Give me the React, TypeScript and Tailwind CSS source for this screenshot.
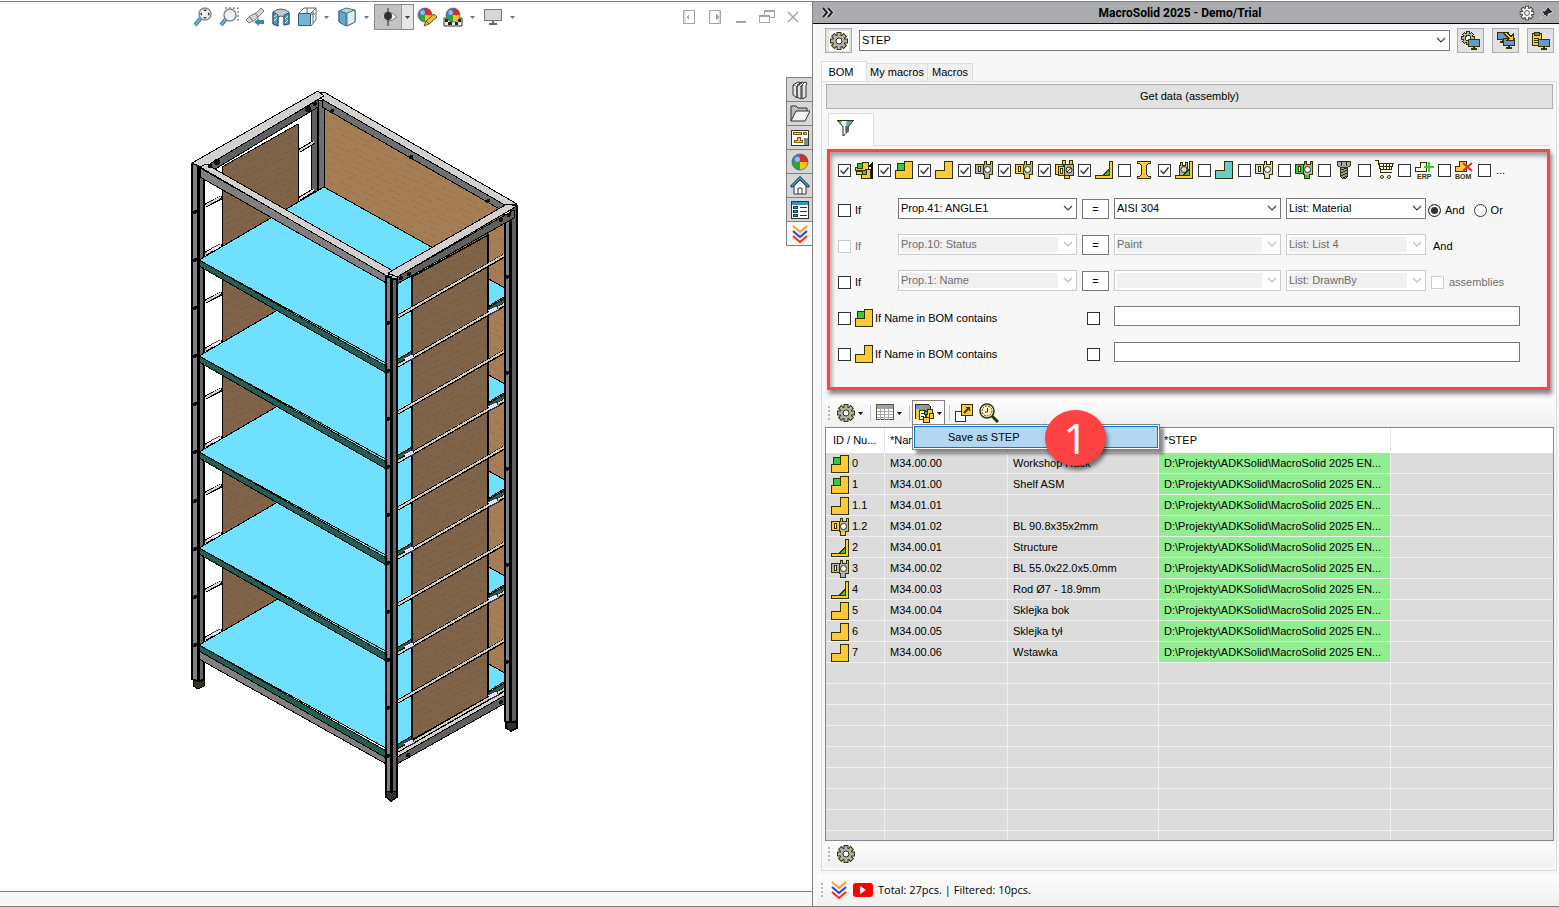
import React, { useState } from 'react';
import clsx from 'clsx';

const INK = '#333300';
const YELLOW = '#ffc933';
const GREEN = '#33cc33';
const BLUE = '#6699cc';

type IconProps = { className?: string };

function Svg({ size = 18, crisp = true, className, children }: { size?: number; crisp?: boolean; className?: string; children: React.ReactNode }) {
  return (
    <svg
      width={size}
      height={size}
      viewBox={`0 0 ${size} ${size}`}
      fill="none"
      shapeRendering={crisp ? 'crispEdges' : 'auto'}
      className={clsx('shrink-0', className)}
      aria-hidden="true"
    >
      {children}
    </svg>
  );
}

/* ---------- BOM type icons ---------- */

const PartIcon = ({ fill = YELLOW }: { fill?: string }) => (
  <Svg>
    <path d="M9.5 .5h8v17h-17v-8h9z" fill={fill} stroke={INK} />
  </Svg>
);

const AssemblyIcon = () => (
  <Svg>
    <path d="M9.5 .5h8v17h-17v-8h9z" fill={YELLOW} stroke={INK} />
    <path d="M2.5 2.5h7v7h-7z" fill={GREEN} stroke={INK} />
  </Svg>
);

const TopAssemblyIcon = () => (
  <Svg>
    <path d="M7.5 1.5h6v8h-13v-3h7z" fill={YELLOW} stroke={INK} />
    <path d="M2.5 2.5h5v5h-5z" fill={GREEN} stroke={INK} />
    <path d="M10.5 8.5h5v9h-9v-4h-5v-3h9z" fill={YELLOW} stroke={INK} />
    <path d="M7.5 9.5h4v4h-4z" fill={GREEN} stroke={INK} />
    <path d="M18 0v18h-2V6h-2V4z" fill="#111100" />
  </Svg>
);

const BlockIcon = ({ left = '#b4b4b4', right = '#b4b4b4', stem = '#b4b4b4' }: { left?: string; right?: string; stem?: string }) => (
  <Svg>
    <path d="M.5 3.5h8v9h-8z" fill={left} stroke={INK} />
    <path d="M3.5 5.5h2v5h-2z" fill="#f2f2e6" stroke={INK} />
    <path d="M9.5 .5h2v3h-2zM15.5 .5h2v3h-2z" fill={stem} stroke={INK} />
    <path d="M9.5 13.5h5v4h-5z" fill={stem} stroke={INK} />
    <path d="M8.5 3.5h9v10h-9z" fill={right} stroke={INK} />
    <path d="M10 3.5h1M16 3.5h1M10 13.5h4" stroke={right} />
    <circle cx="12.5" cy="8.5" r="3" fill="#fff" stroke={INK} shapeRendering="auto" />
  </Svg>
);

const MultiBlockIcon = () => (
  <Svg size={20}>
    <path d="M.5 4.5h8v10h-8z" fill={YELLOW} stroke={INK} />
    <path d="M7.5 .5h3v4h-3zM14.5 .5h3v4h-3zM9.5 15.5h5v3h-5z" fill={YELLOW} stroke={INK} />
    <path d="M3.5 6.5h6v9h-6z" fill={YELLOW} stroke={INK} />
    <path d="M5.5 8.5h2v5h-2z" fill="#f2f2e6" stroke={INK} />
    <path d="M9.5 4.5h9v11h-9z" fill="#b4b4b4" stroke={INK} />
    <circle cx="14" cy="10" r="3" fill="#ddd" stroke={INK} shapeRendering="auto" />
    <path d="M12 12l4-4" stroke={INK} />
  </Svg>
);

const WeldIcon = () => (
  <Svg>
    <path d="M14.5 .5h3v17h-17v-3h14z" fill={YELLOW} stroke={INK} />
    <path d="M8 14.5L14.5 8v6.5z" fill={GREEN} stroke={INK} />
  </Svg>
);

const BeamIcon = () => (
  <Svg>
    <path d="M2.5 .5h13v2h-2l-2 2v9l2 2h2v2h-13v-2h2l2-2v-9l-2-2h-2z" fill={YELLOW} stroke={INK} />
  </Svg>
);

const WeldBlockIcon = () => (
  <Svg>
    <path d="M5.5 1.5h2v3h3v-3h2v13h-8v-10h1z" fill="#b4b4b4" stroke={INK} />
    <path d="M14.5 .5h3v17h-17v-3h14z" fill={YELLOW} stroke={INK} />
    <circle cx="9" cy="8.5" r="3" fill="#ddd" stroke={INK} shapeRendering="auto" />
    <path d="M8 14.5L14.5 8v6.5z" fill={GREEN} stroke={INK} />
  </Svg>
);

const BoltIcon = () => (
  <Svg>
    <path d="M2.5 .5h13v4l-3 2h-7l-3-2z" fill="#a6a6a6" stroke={INK} />
    <path d="M6.5 1v4M11.5 1v4" stroke={INK} />
    <path d="M5.5 6.5h7v9l-2 2h-3l-2-2z" fill="#999" stroke={INK} />
    <path d="M6 9l6-2M6 12l6-3M6 15l6-3M8 17l4-2" stroke={INK} />
  </Svg>
);

const CartIcon = () => (
  <Svg size={20}>
    <path d="M0 .5h3l3 12h11M4 3.5h14l-2 6H6M5 6.5h12M8.5 3v7M11.5 3v7M14.5 3v7" stroke={INK} />
    <path d="M5 12.5h12" stroke={INK} />
    <circle cx="7" cy="17" r="1.5" stroke={INK} shapeRendering="auto" />
    <circle cx="14" cy="17" r="1.5" stroke={INK} shapeRendering="auto" />
  </Svg>
);

const ErpIcon = () => (
  <svg width="20" height="19" viewBox="0 0 20 19" fill="none" className="shrink-0" aria-hidden="true">
    <path d="M5.5 1.5h6v9H.5v-4h5z" fill="#f7f7f0" stroke={INK} shapeRendering="crispEdges" />
    <path d="M9 6h10M14 1v10" stroke={GREEN} strokeWidth="2" shapeRendering="crispEdges" />
    <text x="2" y="18" fontSize="7" fontWeight="700" fontFamily="Liberation Sans, Arial, sans-serif" fill={INK}>ERP</text>
  </svg>
);

const BomIcon = () => (
  <svg width="20" height="19" viewBox="0 0 20 19" fill="none" className="shrink-0" aria-hidden="true">
    <path d="M4.5 .5h7v10h-11v-5h4z" fill={YELLOW} stroke={INK} shapeRendering="crispEdges" />
    <path d="M8 2l9 8M17 2l-9 8" stroke="#d63333" strokeWidth="2" />
    <text x="0" y="18" fontSize="7" fontWeight="700" fontFamily="Liberation Sans, Arial, sans-serif" fill={INK}>BOM</text>
  </svg>
);

/* ---------- toolbar icons ---------- */

const TEETH = [0, 45, 90, 135];

const GearIcon = ({ size = 20, fill = '#b0b0b0', ink = INK, hole = '#fff' }: { size?: number; fill?: string; ink?: string; hole?: string }) => (
  <svg width={size} height={size} viewBox="0 0 20 20" className="shrink-0" aria-hidden="true">
    {TEETH.map(a => (
      <rect key={a} x="7.5" y="1" width="5" height="18" fill={ink} transform={`rotate(${a} 10 10)`} />
    ))}
    <circle cx="10" cy="10" r="6.5" fill={ink} />
    {TEETH.map(a => (
      <rect key={a} x="8.5" y="2" width="3" height="16" fill={fill} transform={`rotate(${a} 10 10)`} />
    ))}
    <circle cx="10" cy="10" r="5.5" fill={fill} />
    <circle cx="10" cy="10" r="3" fill={hole} stroke={ink} />
  </svg>
);

const Monitor = ({ x, y }: { x: number; y: number }) => (
  <g transform={`translate(${x} ${y})`}>
    <path d="M.5 .5h11v7H.5z" fill={BLUE} stroke={INK} />
    <path d="M6 8v2M3 10h6" stroke={INK} strokeWidth="2" />
  </g>
);

const GearMonitorIcon = () => (
  <Svg size={20}>
    <g transform="translate(7 7)">
      {TEETH.map(a => (
        <path key={a} d="M0 -7V7" stroke={INK} strokeWidth="4" transform={`rotate(${a})`} />
      ))}
      {TEETH.map(a => (
        <path key={a} d="M0 -6V6" stroke="#b0b0b0" strokeWidth="2" transform={`rotate(${a})`} />
      ))}
      <circle r="4" fill="#b0b0b0" />
      <circle r="2.5" fill="#fff" stroke={INK} />
    </g>
    <Monitor x={7} y={8} />
  </Svg>
);

const SendMonitorIcon = () => (
  <Svg size={20}>
    <Monitor x={1} y={1} />
    <Monitor x={7} y={7} />
    <path d="M7 1.5h4l4 4 2-2v6h-6l2-2z" fill={YELLOW} stroke={INK} />
  </Svg>
);

const ClipboardMonitorIcon = () => (
  <Svg size={20}>
    <path d="M1.5 2.5h9v12h-9z" fill={YELLOW} stroke={INK} />
    <path d="M3.5 1.5h5v3h-5z" fill="#808080" stroke={INK} />
    <path d="M3 7.500h5M3 9.500h4M3 11.500h4" stroke={INK} />
    <Monitor x={7} y={8} />
  </Svg>
);

const FunnelIcon = () => (
  <Svg crisp={false}>
    <path d="M1 1h15l-4 6v5l-5 5V8L1 2z" fill={BLUE} />
    <path d="M6 1h4l-1 6v7l-2 2V8L4 4z" fill="#eef2f8" />
    <path d="M0 1.5h17M1 2l5 6v9M16 2l-5 6v5M6 17l2-2M9 7v7" stroke={INK} />
  </Svg>
);

const GridIcon = () => (
  <Svg>
    <path d="M.5 .5h17v15H.5z" fill="#fff" stroke="#555544" />
    <path d="M1 1h16v3H1z" fill="#a0a0a0" />
    <path d="M1 4.5h16M1 7.5h16M1 10.5h16M1 13.5h16M4.5 4v12M8.5 4v12M12.5 4v12" stroke="#a8a8a8" />
  </Svg>
);

const SaveIcon = () => (
  <Svg size={20}>
    <path d="M.5 .5h13l2 2v12H.5z" fill={BLUE} stroke={INK} />
    <path d="M4 1h8v4H4z" fill="#9a9a9a" />
    <path d="M1 5h3v10H1z" fill={YELLOW} />
    <path d="M4.5 6.500h6v9h-6z" fill="#fff" stroke={INK} />
    <path d="M6 9.500h3M6 12.500h3" stroke={INK} />
    <path d="M12.5 5.500h5v8h-6v-4h1z" fill={YELLOW} stroke={INK} />
    <path d="M9.500 7.500h3v3h-3z" fill={GREEN} stroke={INK} />
    <path d="M14.500 9.500h4v5h-4v4h-6v-5h6z" fill={YELLOW} stroke={INK} />
  </Svg>
);

const PopOutIcon = () => (
  <Svg>
    <path d="M.5 7.5h10v10H.5z" fill="#fff" stroke={INK} />
    <path d="M6.5 .5h11v11h-11z" fill={YELLOW} stroke={INK} />
    <path d="M9 9l5-5" stroke={INK} strokeWidth="2" shapeRendering="auto" />
    <path d="M10 3h5v5z" fill={INK} />
  </Svg>
);

const InspectIcon = () => (
  <Svg size={20} crisp={false}>
    <circle cx="8" cy="8" r="7" fill="#fff" stroke={INK} strokeWidth="1.500" />
    <circle cx="8" cy="8" r="5" fill="#fff3c8" stroke={INK} strokeDasharray="2 1" />
    <path d="M8.500 5v4H6" stroke={INK} />
    <path d="M13 13l6 6" stroke={INK} strokeWidth="3" />
  </Svg>
);

const ChevronsIcon = () => (
  <Svg crisp={false}>
    <path d="M2 1l7 6 7-6" stroke="#ff9a22" strokeWidth="2" />
    <path d="M2 6l7 6 7-6" stroke="#2040d8" strokeWidth="2" />
    <path d="M2 11l7 6 7-6" stroke="#ff2a10" strokeWidth="2" />
  </Svg>
);

/* ---------- viewport icons ---------- */

const Lens = ({ cx, cy }: { cx: number; cy: number }) => (
  <>
    <path d={`M${cx - 4} ${cy + 4}L2 18`} stroke="#2f6f96" strokeWidth="4" />
    <path d={`M${cx - 4} ${cy + 4}L2 18`} stroke="#6fb6d8" strokeWidth="2" />
    <circle cx={cx} cy={cy} r="6" fill="#f0f3f5" stroke="#85898c" strokeWidth="1.500" />
  </>
);

const ZoomFitIcon = () => (
  <Svg size={20} crisp={false}>
    <Lens cx={12} cy={7} />
    <path d="M12 2l2 2h-4zM12 12l2-2h-4zM7 7l2-2v4zM17 7l-2-2v4z" fill="#444" />
  </Svg>
);

const ZoomAreaIcon = () => (
  <Svg size={20} crisp={false}>
    <path d="M6 1h13v13" stroke="#555" strokeDasharray="2 2" />
    <Lens cx={11} cy={8} />
  </Svg>
);

const PrevViewIcon = () => (
  <Svg size={20} crisp={false}>
    <path d="M16 1l3 3-9 9-6 3-3-3 4-4 6-3z" fill="#d3d5d6" stroke="#777" />
    <path d="M4 9l4 5M10 6l3 4" stroke="#666" />
    <path d="M9 15l5-4v2h5v4h-5v2z" fill="#3d86ab" />
  </Svg>
);

const SectionIcon = () => (
  <Svg size={20} crisp={false}>
    <path d="M2 5q8-6 16 0v12l-5 1v-8q-3-2-6 0v9l-5-2z" fill="#c4c8ca" stroke="#55606a" />
    <path d="M2 5l5 3v11l-5-2zM13 8l5-2v11l-5 1z" fill="#4f9cc2" stroke="#23536d" />
    <path d="M3 10l3-2M3 14l3-3M14 12l3-3M14 16l3-3" stroke="#d9eef8" />
  </Svg>
);

const OrientIcon = () => (
  <Svg size={20} crisp={false}>
    <path d="M2 6l5-5h12v12l-5 6" fill="#fff" stroke="#59646b" />
    <path d="M14 6l5-5M10 1v6M16 4v12M8 7h10" stroke="#59646b" />
    <path d="M1.5 6.5h12v12h-12z" fill="#74b5d4" stroke="#2d5f7b" />
  </Svg>
);

const CubeIcon = () => (
  <Svg size={20} crisp={false}>
    <path d="M2 4l7-3 9 2v12l-8 4-8-4z" fill="#a9d7ea" stroke="#5a6b75" />
    <path d="M2 4l7 2v13l-7-4z" fill="#5ca7cb" stroke="#3a6f8a" />
    <path d="M10 6l8-3v12l-8 4z" fill="#dceef5" stroke="#5a6b75" />
  </Svg>
);

const EyeIcon = () => (
  <Svg size={20} crisp={false}>
    <path d="M1 10q9-10 18 0-9 8-18 0z" fill="#eee" stroke="#777" />
    <path d="M1 10q4-5 9-5v9q-6 0-9-4z" fill="#c9c9c9" />
    <circle cx="10" cy="9" r="4" fill="#333" />
    <path d="M10 1v18" stroke="#222" />
  </Svg>
);

const Ball = ({ cx = 9, cy = 8, r = 7 }: { cx?: number; cy?: number; r?: number }) => (
  <g transform={`translate(${cx} ${cy})`}>
    <path d={`M0 0V${-r}A${r} ${r} 0 0 0 ${-r} 0z`} fill="#3b76c4" />
    <path d={`M0 0H${r}A${r} ${r} 0 0 0 0 ${-r}z`} fill="#d92c22" />
    <path d={`M0 0V${r}A${r} ${r} 0 0 0 ${r} 0z`} fill="#f2c61c" />
    <path d={`M0 0H${-r}A${r} ${r} 0 0 0 0 ${r}z`} fill="#2da53a" />
    <circle cx={-r / 3} cy={-r / 3} r={r / 3} fill="#fff" opacity=".5" />
    <circle r={r} stroke="#555" strokeWidth=".7" />
  </g>
);

const AppearanceIcon = () => (
  <Svg size={20} crisp={false}>
    <Ball cx={8} />
    <path d="M7 19l2-5 8-7 3 3-8 7z" fill="#e8bd3a" stroke="#6b5520" />
    <path d="M9 14l3 3" stroke="#6b5520" />
  </Svg>
);

const SceneIcon = () => (
  <Svg size={20} crisp={false}>
    <path d="M1 11h18v8H1z" fill="#eee" stroke="#333" />
    <path d="M2 12h3v3H2zM15 12h3v3h-3zM5 15h4v3H5zM12 15h3v3h-3z" fill="#222" />
    <Ball cx={10} />
  </Svg>
);

const DisplayIcon = () => (
  <Svg size={20}>
    <path d="M1.5 2.5h17v11h-17z" fill="#d5d8da" stroke="#777" />
    <path d="M10 14v3M6 17h8" stroke="#666" strokeWidth="2" />
  </Svg>
);

const LibraryIcon = () => (
  <Svg size={20} crisp={false}>
    <path d="M3 5l4 1v12l-4-3zM7 5l4 1v13l-4-2zM12 5l4-1v13l-4 2z" fill="#e4e4e4" stroke="#333" />
    <path d="M3 5l5-3 4 1-5 3M7 5l5-3 2 1-3 3M12 5l3-3 2 1-1 2" fill="#fff" stroke="#333" />
  </Svg>
);

const FolderIcon = () => (
  <Svg size={20} crisp={false}>
    <path d="M1 17V2h5l2 2h9v4" fill="#bdbdbd" stroke="#333" />
    <path d="M1 17L6 7h14l-5 10z" fill="#f4f4f4" stroke="#333" />
  </Svg>
);

const PaletteIcon = () => (
  <Svg>
    <path d="M.5 1.5h17v15H.5z" fill="#fff" stroke="#333" />
    <path d="M2.5 3.5h8v2h-8zM12.5 3.5h3v2h-3zM6.5 8.5h3v3h2v2h-8v-2h3z" fill={YELLOW} stroke="#7a5a00" />
    <path d="M13 9h4v7h-4z" fill="#888" />
  </Svg>
);

const HomeIcon = () => (
  <Svg size={20} crisp={false}>
    <path d="M4 10v8h12v-8l-6-6z" fill="#fff" stroke="#333" />
    <path d="M1 11l9-9 9 9" stroke="#173f55" strokeWidth="3" />
    <path d="M2 10l8-8 8 8" stroke="#4c9ec4" strokeWidth="1.500" />
    <path d="M8 18v-6h4v6" stroke="#333" />
  </Svg>
);

const PropsIcon = () => (
  <Svg>
    <path d="M.5 .5h17v17H.5z" fill="#fff" stroke="#333" />
    <path d="M1 1h16v3H1z" fill="#3a92bd" />
    <path d="M2.5 5.500h4v2h-4zM2.500 9.500h4v2h-4zM2.500 13.500h4v2h-4z" fill="#3a92bd" stroke="#153c50" />
    <path d="M9 6.500h7M9 10.500h7M9 14.500h7" stroke="#333" />
  </Svg>
);

const Caret = ({ className = 'text-gray-500' }: IconProps) => (
  <svg width="5" height="3" viewBox="0 0 5 3" className={clsx('shrink-0', className)} aria-hidden="true">
    <path d="M0 0h5L2.5 3z" fill="currentColor" />
  </svg>
);

/* ---------- 3D model ---------- */

const LEVELS = [0, 96, 192, 288, 385];

function RackModel() {
  return (
    <svg width="330" height="712" viewBox="190 90 330 712" fill="none" role="img" aria-label="Workshop Rack" shapeRendering="crispEdges" className="shrink-0">
      <defs>
        <pattern id="woodLight" width="24" height="12" patternUnits="userSpaceOnUse" patternTransform="rotate(24)">
          <rect width="24" height="12" fill="#a57e56" />
          <path d="M0 3h14M6 8h18" stroke="#9b7045" strokeWidth="1" strokeDasharray="5 2 2 1" />
        </pattern>
        <pattern id="woodDark" width="22" height="12" patternUnits="userSpaceOnUse" patternTransform="rotate(-24)">
          <rect width="22" height="12" fill="#806449" />
          <path d="M0 3h14M6 8h16" stroke="#775839" strokeWidth="1" strokeDasharray="4 2 2 1" />
        </pattern>
      </defs>

      <g stroke="#000" strokeLinejoin="round">
        {/* back panel and rear post */}
        <path d="M324 106L504 208V694L324 590z" fill="url(#woodLight)" />
        <path d="M311 100h6v92h-6z" fill="#606060" />
        <path d="M318 100h6v92h-6z" fill="#707070" />
        <path d="M222 167L298 124V590L222 632z" fill="url(#woodDark)" />
        {[0, 48].map(d => (
          <g key={d}>
            <path d={`M299 ${151 + d}l15-9`} strokeWidth="4" />
            <path d={`M299 ${151 + d}l15-9`} stroke="#d8d4cc" strokeWidth="2" />
          </g>
        ))}

        {/* rods on the left side */}
        {LEVELS.map(d => (
          <g key={d}>
            <path d={`M205 ${206 + d}l17-9M205 ${254 + d}l17-9`} strokeWidth="4" />
            <path d={`M205 ${206 + d}l16-9M205 ${254 + d}l16-9`} stroke="#d8d4cc" strokeWidth="2" />
            <path d={`M213 ${250 + d}l8-4`} stroke="#445" strokeWidth="5" />
            <path d={`M213 ${250 + d}l8-4`} stroke="#e4e9ff" strokeWidth="4" />
          </g>
        ))}

        {/* left post */}
        <path d="M193 680h11v6l-6 3-5-3z" fill="#33332a" />
        <path d="M192 164h6v517l-6-2z" fill="#808080" strokeWidth="1.5" />
        <path d="M199 167h5v512l-5 2z" fill="#666" strokeWidth="1.5" />

        {/* bottom beams */}
        <path d="M199 650L388 757V765L199 659z" fill="#808080" />
        <path d="M397 749L509 685V693L397 757z" fill="#d2d1cf" />
        <path d="M397 757L509 693V701L397 764z" fill="#606060" />

        {/* shelves, lowest first */}
        {[...LEVELS].reverse().map(d => (
          <g key={d} transform={`translate(0 ${d})`}>
            <path d="M199 260L324 187L512 292L391 366z" fill="#70e0ff" />
            <path d="M199 260L388 367V374L199 266z" fill="#235f52" />
            <path d="M391 363L512 294V299L391 368z" fill="#235f52" />
          </g>
        ))}

        {/* rear and left top beams */}
        <path d="M322 98L503 202V211L322 107z" fill="#707070" />
        <path d="M317 92L324 92L517 204L503 204L320 98z" fill="#d2d1cf" />
        <path d="M203 167L318 100V107L207 174z" fill="#606060" />
        <path d="M192 163L318 91L324 96L203 168z" fill="#d2d1cf" />

        {/* side panel */}
        <path d="M412 277L488 235V697L412 740z" fill="url(#woodDark)" strokeWidth="1.5" />

        {LEVELS.map(d => (
          <g key={d}>
            <path d={`M397 ${317 + d}L509 ${253 + d}M397 ${366 + d}L509 ${302 + d}`} strokeWidth="4" />
            <path d={`M397 ${317 + d}L508 ${253 + d}M397 ${366 + d}L508 ${302 + d}`} stroke="#d3cbbe" strokeWidth="2" />
            <path d={`M405 ${360 + d}l9-4M489 ${312 + d}l9-4`} stroke="#334" strokeWidth="6" />
            <path d={`M405 ${360 + d}l8-4M489 ${312 + d}l8-4`} stroke="#dfe4fb" strokeWidth="4" />
          </g>
        ))}

        {/* right and front posts */}
        <g strokeWidth="1.5">
          <path d="M506 722h11v6l-6 3-5-3z" fill="#33332a" />
          <path d="M505 215h5v507l-5-1z" fill="#808080" />
          <path d="M511 206h6v515l-6 1z" fill="#606060" />
          <path d="M386 791h11v6l-6 4-5-4z" fill="#33332a" />
        </g>

        {/* front top beams */}
        <path d="M200 168L388 275V284L200 177z" fill="#808080" />
        <path d="M200 167L206 164L393 271L387 276z" fill="#d2d1cf" />
        <path d="M397 277L514 210V218L397 284z" fill="#606060" />
        <path d="M388 273L507 204L517 206L397 277z" fill="#d2d1cf" />
        <g strokeWidth="1.5">
          <path d="M386 277h5v515l-5-1z" fill="#808080" />
          <path d="M392 279h5v512l-5 1z" fill="#606060" />
        </g>
      </g>

      <g fill="#111">
        {[0, 48, 96, 144, 192, 240, 289, 337, 385, 433].map(d => (
          <React.Fragment key={d}>
            <circle cx="195" cy={212 + d} r="2" />
            <circle cx="388" cy={323 + d} r="2" />
          </React.Fragment>
        ))}
        {LEVELS.map(d => (
          <circle key={d} cx="507" cy={277 + d} r="2" />
        ))}
        <circle cx="332" cy="111" r="2" />
        <circle cx="411" cy="157" r="2" />
        <circle cx="488" cy="201" r="2" />
        <circle cx="308" cy="109" r="3" />
        <circle cx="315" cy="104" r="2" />
        <circle cx="217" cy="162" r="3" />
        <circle cx="210" cy="166" r="2" />
        <circle cx="401" cy="278" r="2" />
        <circle cx="409" cy="274" r="2" />
        <circle cx="501" cy="220" r="2" />
        <circle cx="509" cy="215" r="2" />
        <circle cx="408" cy="755" r="2" />
        <circle cx="501" cy="702" r="2" />
      </g>
    </svg>
  );
}

/* ---------- form controls ---------- */

function Check({ id, label, defaultChecked = false, disabled = false }: { id?: string; label?: string; defaultChecked?: boolean; disabled?: boolean }) {
  return (
    <span className="grid size-[13px] shrink-0">
      <input
        id={id}
        type="checkbox"
        aria-label={label}
        defaultChecked={defaultChecked}
        disabled={disabled}
        className="peer col-start-1 row-start-1 size-[13px] appearance-none border border-[#333] bg-white disabled:border-[#ccc]"
      />
      <svg viewBox="0 0 13 13" fill="none" className="pointer-events-none invisible col-start-1 row-start-1 size-[13px] peer-checked:visible" aria-hidden="true">
        <path d="M2.5 6.5l3 3 5-6" stroke="#333" strokeWidth="1.300" />
      </svg>
    </span>
  );
}

function Combo({ label, value, disabled = false, className }: { label: string; value: string; disabled?: boolean; className?: string }) {
  return (
    <div className={clsx('flex h-[21px] min-w-0 items-center border bg-white p-[2px] pr-0', disabled ? 'border-[#ccc] text-[#bbb]' : 'border-[#7a7a7a] text-[#444]', className)}>
      <select
        aria-label={label}
        disabled={disabled}
        defaultValue={value}
        className="h-[15px] min-w-0 flex-1 appearance-none bg-white leading-[15px] text-black opacity-100 outline-none disabled:bg-[#f0f0f0] disabled:text-[#6d6d6d]"
      >
        <option>{value}</option>
      </select>
      <svg width="18" height="9" viewBox="0 0 18 9" fill="none" className="shrink-0" aria-hidden="true">
        <path d="M6 2l4 4 4-4" stroke="currentColor" strokeWidth="1.200" />
      </svg>
    </div>
  );
}

const EqualsButton = () => (
  <button className="mt-px h-5 w-[27px] shrink-0 border border-[#7a7a7a] bg-white leading-none">=</button>
);

const Radio = ({ label, defaultChecked = false }: { label: string; defaultChecked?: boolean }) => (
  <label className="flex items-center gap-1">
    <input
      type="radio"
      name="join"
      defaultChecked={defaultChecked}
      className="size-[13px] appearance-none rounded-full border border-[#333] bg-white checked:bg-[#333] checked:shadow-[inset_0_0_0_2px_#fff]"
    />
    {label}
  </label>
);

const Grip = () => (
  <span className="flex flex-col gap-[2px]">
    {[0, 1, 2, 3].map(i => (
      <span key={i} className="size-[2px] bg-[#b8b8b8]" />
    ))}
  </span>
);

const Divider = () => <span className="h-4 w-px bg-[#c5c5c5]" />;

/* ---------- left side ---------- */

const viewButton = 'flex h-[26px] w-[26px] items-center justify-center';

function Viewport() {
  return (
    <section className="flex min-h-0 min-w-0 flex-col border-r border-[#808080] bg-white">
      <div className="flex shrink-0 items-start justify-between pt-[2px] pr-[6px] pl-[190px]">
        <div className="flex items-center">
          <button aria-label="Zoom to fit" className={viewButton}><ZoomFitIcon /></button>
          <button aria-label="Zoom to area" className={viewButton}><ZoomAreaIcon /></button>
          <button aria-label="Previous view" className={viewButton}><PrevViewIcon /></button>
          <button aria-label="Section view" className={viewButton}><SectionIcon /></button>
          <button aria-label="View orientation" className="flex h-[26px] w-10 items-center gap-[7px] pl-[3px]"><OrientIcon /><Caret /></button>
          <button aria-label="Display style" className="flex h-[26px] w-10 items-center gap-[7px] pl-[3px]"><CubeIcon /><Caret /></button>
          <button aria-label="Hide or show items" className="flex h-[26px] w-10 items-center border border-[#8a8a8a] bg-[#c3c3c3]">
            <span className="flex flex-1 justify-center"><EyeIcon /></span>
            <span className="flex h-full w-3 items-center justify-center border-l border-[#9a9a9a] bg-[#e6e6e6]"><Caret className="text-gray-700" /></span>
          </button>
          <button aria-label="Edit appearance" className={viewButton}><AppearanceIcon /></button>
          <button aria-label="Apply scene" className="flex h-[26px] w-10 items-center gap-[7px] pl-[3px]"><SceneIcon /><Caret /></button>
          <button aria-label="View settings" className="flex h-[26px] w-10 items-center gap-[7px] pl-[3px]"><DisplayIcon /><Caret /></button>
        </div>
        <div className="flex items-center text-[#a5a5a5]">
          <button aria-label="Previous pane" className={viewButton}>
            <Svg><path d="M3.5 2.5h11v13h-11z" stroke="currentColor" /><path d="M4 3h2v12H4z" fill="currentColor" opacity=".3" /><path d="M9 6v6L6 9z" fill="currentColor" /></Svg>
          </button>
          <button aria-label="Next pane" className={viewButton}>
            <Svg><path d="M3.5 2.5h11v13h-11z" stroke="currentColor" /><path d="M12 3h2v12h-2z" fill="currentColor" opacity=".3" /><path d="M10 6v6l3-3z" fill="currentColor" /></Svg>
          </button>
          <button aria-label="Minimize" className={viewButton}>
            <Svg><path d="M4 14h10" stroke="currentColor" strokeWidth="2" /></Svg>
          </button>
          <button aria-label="Restore" className={viewButton}>
            <Svg><path d="M6.5 7V2.5h10v7H12" stroke="currentColor" /><path d="M1.5 7.5h10v7h-10zM1 8.5h10M7 3.5h10" stroke="currentColor" /></Svg>
          </button>
          <button aria-label="Close" className={viewButton}>
            <Svg crisp={false}><path d="M4 4l10 10M14 4L4 14" stroke="currentColor" strokeWidth="1.500" /></Svg>
          </button>
        </div>
      </div>

      <div className="flex min-h-0 flex-1 justify-between overflow-hidden">
        <div className="mt-[60px] pl-[190px]">
          <RackModel />
        </div>
        <nav className="mt-[47px] flex w-[26px] shrink-0 flex-col self-start border-t border-l border-[#808080]">
          {[
            { name: 'Design library', icon: <LibraryIcon /> },
            { name: 'File explorer', icon: <FolderIcon /> },
            { name: 'View palette', icon: <PaletteIcon /> },
            { name: 'Appearances', icon: <Svg crisp={false}><Ball cx={9} cy={9} r={8} /></Svg> },
            { name: 'Home', icon: <HomeIcon /> },
            { name: 'Custom properties', icon: <PropsIcon /> },
          ].map(t => (
            <button key={t.name} aria-label={t.name} className="flex h-6 items-center justify-center border-b border-[#808080] bg-[#d6d6d6]">
              {t.icon}
            </button>
          ))}
          <button aria-label="MacroSolid" className="flex h-6 items-center justify-center border-b border-[#808080] bg-[#f7f7f7]">
            <ChevronsIcon />
          </button>
        </nav>
      </div>

      <div className="h-[15px] shrink-0 border-t border-[#808080] bg-[#f7f7f7]" />
    </section>
  );
}

/* ---------- right side ---------- */

const filters = [
  { name: 'Top assembly', icon: <TopAssemblyIcon />, on: true },
  { name: 'Assembly', icon: <AssemblyIcon />, on: true },
  { name: 'Part', icon: <PartIcon />, on: true },
  { name: 'Sheet metal', icon: <BlockIcon />, on: true },
  { name: 'Sheet metal in part', icon: <BlockIcon left={YELLOW} stem={YELLOW} />, on: true },
  { name: 'Multi-body sheet metal', icon: <MultiBlockIcon />, on: true },
  { name: 'Weldment', icon: <WeldIcon />, on: true },
  { name: 'Profile', icon: <BeamIcon />, on: false },
  { name: 'Welded sheet metal', icon: <WeldBlockIcon />, on: true },
  { name: 'Virtual part', icon: <PartIcon fill="#66cccc" />, on: false },
  { name: 'Excluded sheet metal', icon: <BlockIcon left="#dcdcdc" right="#dcdcdc" stem="#dcdcdc" />, on: false },
  { name: 'Green sheet metal', icon: <BlockIcon left={GREEN} stem={GREEN} />, on: false },
  { name: 'Toolbox', icon: <BoltIcon />, on: false },
  { name: 'Purchased', icon: <CartIcon />, on: false },
  { name: 'Add to ERP', icon: <ErpIcon />, on: false },
  { name: 'Not in BOM', icon: <BomIcon />, on: false },
];

const rows = [
  { id: '0', icon: <AssemblyIcon />, number: 'M34.00.00', name: 'Workshop Rack' },
  { id: '1', icon: <AssemblyIcon />, number: 'M34.01.00', name: 'Shelf ASM' },
  { id: '1.1', icon: <PartIcon />, number: 'M34.01.01', name: '' },
  { id: '1.2', icon: <BlockIcon left={YELLOW} stem={YELLOW} />, number: 'M34.01.02', name: 'BL 90.8x35x2mm' },
  { id: '2', icon: <WeldIcon />, number: 'M34.00.01', name: 'Structure' },
  { id: '3', icon: <BlockIcon />, number: 'M34.00.02', name: 'BL 55.0x22.0x5.0mm' },
  { id: '4', icon: <WeldIcon />, number: 'M34.00.03', name: 'Rod Ø7 - 18.9mm' },
  { id: '5', icon: <PartIcon />, number: 'M34.00.04', name: 'Sklejka bok' },
  { id: '6', icon: <PartIcon />, number: 'M34.00.05', name: 'Sklejka tył' },
  { id: '7', icon: <PartIcon />, number: 'M34.00.06', name: 'Wstawka' },
];

function FilterBox() {
  return (
    <div className="mt-[3px] mr-1 ml-[2px] h-[241px] shrink-0 border-[3px] border-[#ff4343] pt-[9px] pr-[27px] pl-2 shadow-[2px_4px_4px_rgba(0,0,0,0.45),inset_2px_4px_4px_rgba(0,0,0,0.35)]">
      <div className="flex h-[18px] items-center">
        {filters.map(f => (
          <label key={f.name} className="flex w-10 shrink-0 items-center gap-1">
            <Check label={f.name} defaultChecked={f.on} />
            {f.icon}
          </label>
        ))}
        <label className="flex items-center gap-[5px]"><Check />...</label>
      </div>

      <div className="mt-[19px]">
        <div className="flex h-9 items-start gap-[5px]">
          <label className="mt-[6px] flex w-[55px] shrink-0 items-center gap-1"><Check />If</label>
          <Combo label="First property" value="Prop.41: ANGLE1" className="w-[179px] shrink-0" />
          <EqualsButton />
          <Combo label="First value" value="AISI 304" className="flex-1" />
          <div className="flex shrink-0 gap-[2px]">
            <Combo label="First list" value="List: Material" className="w-[140px]" />
            <div className="mt-[6px] flex h-[13px] w-[92px] items-center gap-[9px]">
              <Radio label="And" defaultChecked />
              <Radio label="Or" />
            </div>
          </div>
        </div>

        <div className="flex h-9 items-start gap-[5px]">
          <label className="mt-[6px] flex w-[55px] shrink-0 items-center gap-1 text-[#6d6d6d]"><Check disabled />If</label>
          <Combo label="Second property" value="Prop.10: Status" disabled className="w-[179px] shrink-0" />
          <EqualsButton />
          <Combo label="Second value" value="Paint" disabled className="flex-1" />
          <div className="flex shrink-0 gap-[2px]">
            <Combo label="Second list" value="List: List 4" disabled className="w-[140px]" />
            <span className="mt-[6px] w-[92px] pl-[5px] leading-[13px]">And</span>
          </div>
        </div>

        <div className="flex h-9 items-start gap-[5px]">
          <label className="mt-[6px] flex w-[55px] shrink-0 items-center gap-1"><Check />If</label>
          <Combo label="Third property" value="Prop.1: Name" disabled className="w-[179px] shrink-0" />
          <EqualsButton />
          <Combo label="Third value" value="" disabled className="flex-1" />
          <div className="flex shrink-0 gap-[2px]">
            <Combo label="Third list" value="List: DrawnBy" disabled className="w-[140px]" />
            <label className="mt-[6px] flex h-[13px] w-[92px] items-center gap-[5px] pl-[3px] text-[#6d6d6d]"><Check disabled />assemblies</label>
          </div>
        </div>

        {[<AssemblyIcon key="asm" />, <PartIcon key="part" />].map((icon, i) => (
          <div key={i} className="flex h-9 items-start gap-[5px]">
            <label className="mt-[3px] flex w-[239px] shrink-0 items-center gap-1">
              <Check />
              <span className="flex items-center gap-[2px]">{icon}If Name in BOM contains</span>
            </label>
            <span className="mt-[6px] w-[27px] shrink-0 pl-[5px]"><Check label="Negate" /></span>
            <input type="text" aria-label="Name in BOM contains" className="h-5 min-w-0 flex-1 border border-[#7a7a7a] bg-white px-1 outline-none" />
          </div>
        ))}
      </div>
    </div>
  );
}

function BomTable() {
  const cell = 'h-[21px] border-r border-b border-[#f0f0f0] p-0 pt-px pl-[5px]';
  return (
    <div className="min-h-0 flex-1 overflow-hidden border border-[#828790] bg-[#dcdcdc]">
      <table className="w-full table-fixed border-separate border-spacing-0 text-left">
        <colgroup>
          <col className="w-[59px]" />
          <col className="w-[123px]" />
          <col className="w-[151px]" />
          <col className="w-[232px]" />
          <col />
        </colgroup>
        <thead>
          <tr className="h-[25px] bg-white">
            <th className="border-r border-[#e5e5e5] p-0 pl-[7px] font-normal">ID / Nu...</th>
            <th className="border-r border-[#e5e5e5] p-0 pl-[5px] font-normal">*Name</th>
            <th className="border-r border-[#e5e5e5] p-0 pl-[5px] font-normal" />
            <th className="border-r border-[#e5e5e5] p-0 pl-[5px] font-normal">*STEP</th>
            <th className="p-0" />
          </tr>
        </thead>
        <tbody>
          {rows.map(r => (
            <tr key={r.id}>
              <td className={cell}>
                <span className="flex items-center gap-[3px]">{r.icon}{r.id}</span>
              </td>
              <td className={cell}>{r.number}</td>
              <td className={cell}>{r.name}</td>
              <td className={clsx(cell, 'bg-[#90ee90]')}>D:\Projekty\ADKSolid\MacroSolid 2025 EN...</td>
              <td className="border-b border-[#f0f0f0] p-0" />
            </tr>
          ))}
          {Array.from({ length: 9 }, (_, i) => (
            <tr key={i}>
              <td className={cell} />
              <td className={cell} />
              <td className={cell} />
              <td className={cell} />
              <td className="border-b border-[#f0f0f0] p-0" />
            </tr>
          ))}
        </tbody>
      </table>
    </div>
  );
}

function BomToolbar() {
  const [open, setOpen] = useState(true);

  return (
    <div className="mt-[9px] flex h-7 shrink-0 items-center rounded-t bg-gradient-to-b from-[#fdfdfd] to-[#f0f0f0] pl-[3px]">
      <Grip />
      <button aria-label="Settings" className="ml-[6px] flex items-center gap-[2px]"><GearIcon /><Caret className="text-black" /></button>
      <span className="ml-[7px] flex"><Divider /></span>
      <button aria-label="Columns" className="ml-[5px] flex items-center gap-[3px]"><GridIcon /><Caret className="text-black" /></button>
      <span className="ml-[7px] flex"><Divider /></span>
      <div className="relative ml-[2px] h-[26px]">
        <button aria-label="Save" onClick={() => setOpen(!open)} className="flex h-[26px] w-[33px] items-center gap-[2px] border border-b-0 border-[#808080] bg-[#fcfcfc] pl-[2px]">
          <SaveIcon />
          <Caret className="text-black" />
        </button>
        {open && (
          <div role="menu" className="absolute top-[24px] left-0 z-10 w-[248px] border border-[#808080] bg-white p-px shadow-[4px_4px_3px_rgba(0,0,0,0.45)]">
            <button role="menuitem" className="flex h-[22px] w-full items-center border border-[#0078d7] bg-[#b3d7f3] pl-[33px]">Save as STEP</button>
            <div className="absolute top-[-15px] left-[132px] flex h-[56px] w-[61px] items-center justify-center rounded-[50%] bg-[#fc4242] font-['Noto_Sans',sans-serif] text-[42px] leading-none text-white shadow-[2px_4px_4px_rgba(0,0,0,0.5)]">
              1
            </div>
          </div>
        )}
      </div>
      <span className="ml-1 flex"><Divider /></span>
      <button aria-label="Open in window" className="ml-[5px]"><PopOutIcon /></button>
      <button aria-label="Inspect" className="ml-[6px]"><InspectIcon /></button>
    </div>
  );
}

const squareButton = 'flex h-[25px] w-[27px] shrink-0 items-center justify-center border border-[#adadad] bg-[#e1e1e1]';

function MacroPanel() {
  return (
    <section className="flex min-h-0 min-w-0 flex-col bg-[#f7f7f7]">
      <header className="flex h-[22px] shrink-0 items-center border-b border-black bg-[#a9abae] pr-1 pl-2">
        <button aria-label="Collapse" className="w-9">
          <svg width="13" height="11" viewBox="0 0 13 11" fill="none" aria-hidden="true">
            <path d="M2 1l4 4.500L2 10M7 1l4 4.500L7 10" stroke="#fff" strokeWidth="4" opacity=".5" />
            <path d="M2 1l4 4.500L2 10M7 1l4 4.500L7 10" stroke="#222" strokeWidth="2" />
          </svg>
        </button>
        <h1 className="flex-1 pr-4 text-center font-['Roboto',sans-serif] text-[12px] leading-4 font-bold">MacroSolid 2025 - Demo/Trial</h1>
        <div className="flex w-9 items-center gap-1">
          <button aria-label="Options"><GearIcon size={16} fill="#f5f5f5" ink="#333" /></button>
          <button aria-label="Pin">
            <svg width="15" height="15" viewBox="0 0 15 15" fill="none" aria-hidden="true">
              <path d="M8 1l6 6-2 1-3 1v4l-3-3-5 4 4-5-3-3h4l2-3z" fill="#2a2a2a" stroke="#eee" strokeWidth=".7" />
            </svg>
          </button>
        </div>
      </header>

      <div className="flex shrink-0 items-center pt-1 pr-[5px] pl-3">
        <button aria-label="Macro settings" className={squareButton}>
          <span className="bg-white"><GearIcon /></span>
        </button>
        <Combo label="Macro" value="STEP" className="ml-[7px] flex-1" />
        <div className="ml-[7px] flex gap-2">
          <button aria-label="Configure screen" className={squareButton}><GearMonitorIcon /></button>
          <button aria-label="Send to screen" className={squareButton}><SendMonitorIcon /></button>
          <button aria-label="Paste to screen" className={squareButton}><ClipboardMonitorIcon /></button>
        </div>
      </div>

      <div className="mt-2 mr-[2px] ml-2 flex min-h-0 flex-1 flex-col">
        <div role="tablist" className="flex shrink-0 items-end">
          <button role="tab" aria-selected="true" className="-mb-px h-[21px] w-[46px] border border-b-0 border-[#dcdcdc] bg-white pr-[6px]">BOM</button>
          <button role="tab" aria-selected="false" className="h-[18px] w-[61px] border-t border-r border-[#dcdcdc] bg-[#f0f0f0]">My macros</button>
          <button role="tab" aria-selected="false" className="h-[18px] w-[45px] border-t border-r border-[#dcdcdc] bg-[#f0f0f0]">Macros</button>
        </div>

        <div className="flex min-h-0 flex-1 flex-col border border-[#dcdcdc] pt-[2px] pr-[2px] pb-[3px] pl-[3px]">
          <button className="mx-px h-[25px] shrink-0 border border-[#adadad] bg-[#e1e1e1]">Get data (assembly)</button>

          <div role="tablist" className="mt-1 mr-1 ml-[3px] flex shrink-0 items-stretch">
            <button role="tab" aria-label="Filter" aria-selected="true" className="flex h-[33px] w-[46px] border border-b-0 border-[#dcdcdc] bg-white pt-[5px] pl-2">
              <FunnelIcon />
            </button>
            <span className="flex-1 border-b border-[#dcdcdc]" />
          </div>

          <FilterBox />
          <BomToolbar />
          <BomTable />

          <div className="flex h-[26px] shrink-0 items-center bg-gradient-to-b from-[#fdfdfd] to-[#f0f0f0] pl-[3px]">
            <Grip />
            <button aria-label="Table settings" className="ml-[6px]"><GearIcon /></button>
          </div>
        </div>
      </div>

      <footer className="mt-[3px] ml-1 flex h-8 shrink-0 items-center bg-gradient-to-b from-[#fdfdfd] to-[#f0f0f0] pl-1">
        <Grip />
        <span className="ml-[7px] flex"><ChevronsIcon /></span>
        <a href="#youtube" aria-label="YouTube" className="ml-[5px] flex h-[14px] w-5 items-center justify-center rounded-[3px] bg-[#ff0000]">
          <svg width="6" height="8" viewBox="0 0 6 8" aria-hidden="true"><path d="M0 0l6 4-6 4z" fill="#fff" /></svg>
        </a>
        <span className="ml-[5px] font-['Open_Sans',sans-serif] text-[11px] leading-4">Total: 27pcs. | Filtered: 10pcs.</span>
      </footer>
    </section>
  );
}

export default function App() {
  return (
    <div className="flex h-screen flex-col overflow-hidden bg-white pt-px font-['Liberation_Sans',Arial,sans-serif] text-[11px] leading-[13px] text-black">
      <main className="grid min-h-0 flex-1 grid-cols-[813fr_746fr] grid-rows-[minmax(0,1fr)] border-y border-[#808080]">
        <Viewport />
        <MacroPanel />
      </main>
    </div>
  );
}
